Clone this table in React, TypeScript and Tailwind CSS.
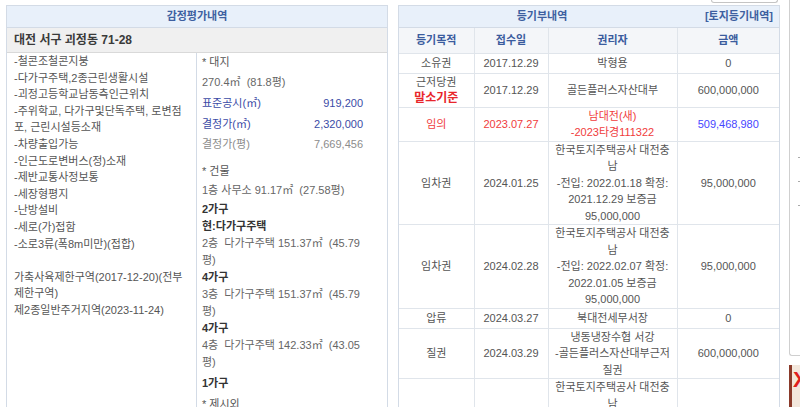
import React from "react";

const leftLines = [
  "-철콘조철콘지붕",
  "-다가구주택,2종근린생활시설",
  "-괴정고등학교남동측인근위치",
  "-주위학교, 다가구및단독주택, 로변점",
  "포, 근린시설등소재",
  "-차량출입가능",
  "-인근도로변버스(정)소재",
  "-제반교통사정보통",
  "-세장형평지",
  "-난방설비",
  "-세로(가)접함",
  "-소로3류(폭8m미만)(접합)",
  "",
  "가축사육제한구역(2017-12-20)(전부",
  "제한구역)",
  "제2종일반주거지역(2023-11-24)",
];

type Row = {
  kind: string[];
  date: string;
  owner: string[];
  amount: string;
  tone?: "red";
  h?: string;
};

const rows: Row[] = [
  { kind: ["소유권"], date: "2017.12.29", owner: ["박형용"], amount: "0", h: "h-[20px]" },
  { kind: ["근저당권", "말소기준"], date: "2017.12.29", owner: ["골든플러스자산대부"], amount: "600,000,000" },
  { kind: ["임의"], date: "2023.07.27", owner: ["남대전(새)", "-2023타경111322"], amount: "509,468,980", tone: "red" },
  {
    kind: ["임차권"],
    date: "2024.01.25",
    owner: ["한국토지주택공사 대전충", "남", "-전입: 2022.01.18 확정:", "2021.12.29 보증금", "95,000,000"],
    amount: "95,000,000",
  },
  {
    kind: ["임차권"],
    date: "2024.02.28",
    owner: ["한국토지주택공사 대전충", "남", "-전입: 2022.02.07 확정:", "2022.01.05 보증금", "95,000,000"],
    amount: "95,000,000",
  },
  { kind: ["압류"], date: "2024.03.27", owner: ["북대전세무서장"], amount: "0", h: "h-[20px]" },
  { kind: ["질권"], date: "2024.03.29", owner: ["냉동냉장수협 서강", "-골든플러스자산대부근저", "질권"], amount: "600,000,000" },
  { kind: [""], date: "", owner: ["한국토지주택공사 대전충", "남", "-전입: 2022.03.02 확정:", "2022.02.17 보증금", "95,000,000"], amount: "" },
];

function AppraisalPanel() {
  return (
    <div className="mt-[5px] w-[382px] shrink-0 border border-[#d3dbe6] bg-white">
      <div className="flex h-[22px] items-center justify-center border-b border-[#d3dbe6] bg-[#e8f0fa] font-bold text-[#3d5fa0]">
        감정평가내역
      </div>
      <div className="flex h-[25px] items-center border-b border-[#d9d9d9] bg-[#f0f0f0] pl-[7px] text-[12px] font-bold text-[#3a3a3a]">
        대전 서구 괴정동 71-28
      </div>
      <div className="flex">
        {/* 좌측 설명 */}
        <div className="w-[190px] shrink-0 border-r border-[#d3dbe6] pl-[7px] leading-[16.6px] h-[400px]">
          {leftLines.map((l, i) => (
            <div key={i} className="h-[16.6px] whitespace-nowrap">
              {l}
            </div>
          ))}
        </div>
        {/* 우측 평가 */}
        <div className="flex-1 pl-[5px] pr-[24px]">
          <div className="h-[19px] leading-[19px]">* 대지</div>
          <div className="h-[21px] leading-[21px] text-[#666]">270.4㎡&nbsp;&nbsp;(81.8평)</div>
          <div className="flex h-[20.5px] items-center justify-between text-[#3b4ba6]">
            <span>표준공시(㎡)</span>
            <span>919,200</span>
          </div>
          <div className="flex h-[20.5px] items-center justify-between text-[#3b4ba6]">
            <span>결정가(㎡)</span>
            <span>2,320,000</span>
          </div>
          <div className="flex h-[20.5px] items-center justify-between text-[#8c8c8c]">
            <span>결정가(평)</span>
            <span>7,669,456</span>
          </div>
          <div className="mt-[7px] h-[18px] leading-[18px]">* 건물</div>
          <div className="h-[21px] leading-[21px] text-[#666] whitespace-nowrap">1층 사무소 91.17㎡&nbsp;&nbsp;(27.58평)</div>
          <div className="leading-[17px] whitespace-nowrap">
            <div className="font-bold text-[#333]">2가구</div>
            <div className="font-bold text-[#333]">현:다가구주택</div>
            <div className="text-[#666]">2층&nbsp;&nbsp;다가구주택 151.37㎡&nbsp;&nbsp;(45.79</div>
            <div className="text-[#666]">평)</div>
            <div className="font-bold text-[#333]">4가구</div>
            <div className="text-[#666]">3층&nbsp;&nbsp;다가구주택 151.37㎡&nbsp;&nbsp;(45.79</div>
            <div className="text-[#666]">평)</div>
            <div className="font-bold text-[#333]">4가구</div>
            <div className="text-[#666]">4층&nbsp;&nbsp;다가구주택 142.33㎡&nbsp;&nbsp;(43.05</div>
            <div className="text-[#666]">평)</div>
          </div>
          <div className="mt-[2px] h-[21px] leading-[21px] font-bold text-[#333]">1가구</div>
          <div className="h-[21px] leading-[21px]">* 제시외</div>
        </div>
      </div>
    </div>
  );
}

function RegistryPanel() {
  return (
    <div className="ml-[10px] w-[382px] shrink-0">
      <div className="flex h-[5px] justify-end pr-[2px]">
        <div className="h-[3px] w-[67px] rounded-b-[3px] border-x border-b border-[#c4c4c4]" />
      </div>
      <div className="border border-[#d3dbe6] bg-white">
        <div className="flex h-[22px] items-center border-b border-[#d3dbe6] bg-[#e8f0fa] font-bold text-[#3d5fa0]">
          <div className="flex-1 text-center">등기부내역</div>
          <div className="w-[94px] pr-[6px] text-right">[토지등기내역]</div>
        </div>
        <table className="w-full table-fixed border-collapse">
          <colgroup>
            <col className="w-[75px]" />
            <col className="w-[74px]" />
            <col className="w-[129px]" />
            <col />
          </colgroup>
          <thead>
            <tr className="h-[25px] bg-[#f4f6f9] font-bold text-[#3b5c9e]">
              <th className="border-b border-r border-[#e0e5eb] font-bold">등기목적</th>
              <th className="border-b border-r border-[#e0e5eb] font-bold">접수일</th>
              <th className="border-b border-r border-[#e0e5eb] font-bold">권리자</th>
              <th className="border-b border-[#e0e5eb] font-bold">금액</th>
            </tr>
          </thead>
          <tbody className="leading-[16.5px]">
            {rows.map((r, i) => {
              const red = r.tone === "red";
              return (
                <tr key={i} className={r.h}>
                  <td className={`border-b border-r border-[#e0e5eb] text-center ${red ? "text-[#f03c3c]" : ""}`}>
                    {r.kind.map((k, j) => (
                      <div key={j} className={k === "말소기준" ? "font-bold text-[#e8262b] text-[12px]" : ""}>
                        {k}
                      </div>
                    ))}
                  </td>
                  <td className={`border-b border-r border-[#e0e5eb] text-center ${red ? "text-[#f03c3c]" : ""}`}>{r.date}</td>
                  <td className={`border-b border-r border-[#e0e5eb] text-center whitespace-nowrap ${red ? "text-[#f03c3c]" : ""}`}>
                    {r.owner.map((o, j) => (
                      <div key={j}>{o}</div>
                    ))}
                  </td>
                  <td className={`border-b border-[#e0e5eb] text-center ${red ? "text-[#4646ff]" : ""}`}>{r.amount}</td>
                </tr>
              );
            })}
          </tbody>
        </table>
      </div>
    </div>
  );
}

export default function App() {
  return (
    <div
      className="h-[407px] w-[800px] overflow-hidden bg-white text-[11px] text-[#555]"
      style={{ fontFamily: "'Liberation Sans', 'Noto Sans CJK KR', sans-serif" }}
    >
      <div className="flex pl-[6px]">
        <AppraisalPanel />
        <RegistryPanel />
        {/* 오른쪽 사이드 */}
        <div className="ml-[9px] flex w-[11px] shrink-0 flex-col">
          <div className="flex h-[356px] flex-col items-end rounded-bl-[3px] border-b border-l border-[#cfcfcf] pt-[157px]">
            <div className="h-[1px] w-[2px] bg-[#aaa]" />
            <div className="mt-[23px] h-[1px] w-[2px] bg-[#aaa]" />
            <div className="mt-[23px] h-[1px] w-[2px] bg-[#aaa]" />
          </div>
          <div className="mt-[9px] h-[42px] overflow-hidden border-l-[3px] border-[#8a3a2a] bg-[#f3e7dc] pl-[1px] text-[22px] font-bold leading-[30px] text-[#e0201c]">
            X
          </div>
        </div>
      </div>
    </div>
  );
}
